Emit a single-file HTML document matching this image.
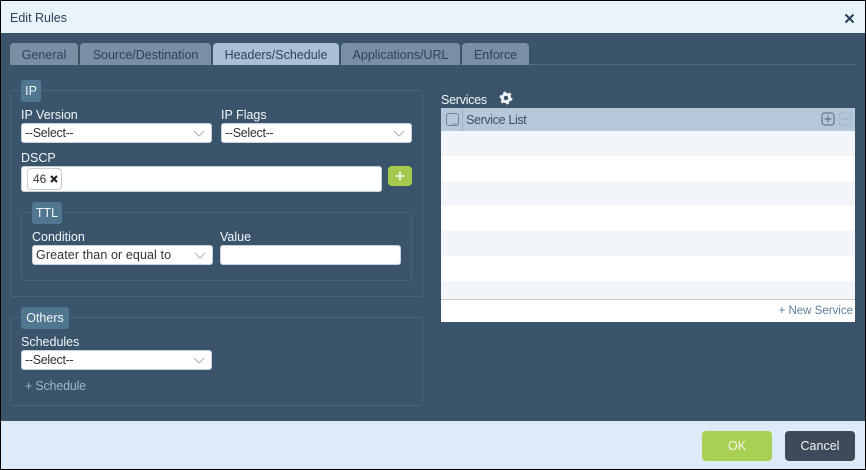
<!DOCTYPE html>
<html><head><meta charset="utf-8">
<style>
html,body{margin:0;padding:0;width:866px;height:470px;overflow:hidden;background:#000}
*{box-sizing:border-box}
body{font-family:"Liberation Sans",Arial,sans-serif;font-size:12.5px;position:relative}
.a{position:absolute}
.t{position:absolute;white-space:nowrap;line-height:16px;height:16px}
.w{color:#f2f6fa}
.d{color:#2f3f4e}
.tab{position:absolute;top:43px;height:22px;background:#7b8fa3;border-radius:4px 4px 0 0;color:#2c4257;text-align:center;line-height:24px}
.fs{position:absolute;border:1px solid #4a6379;border-radius:3px}
.lg{position:absolute;background:#507690;border-radius:3px;color:#f2f6fa;text-align:center;line-height:23px;height:22px}
.in{position:absolute;background:#fff;border-radius:3px;border:1px solid #c8d2dc;height:20px;color:#333;line-height:18px;padding-left:3px;white-space:nowrap}
.in svg{position:absolute;right:6px;top:6px}
.sel{letter-spacing:-.3px}
.r{position:absolute;left:441px;width:414px;height:25px}
</style></head><body>
<div class="a" style="left:1px;top:1px;width:864px;height:32px;background:#e8f3fc"></div>
<div class="a" style="left:1px;top:33px;width:864px;height:388px;background:#3a546b"></div>
<div class="a" style="left:1px;top:421px;width:864px;height:48px;background:#dcebf7"></div>

<div class="t" style="left:10px;top:10px;color:#2c4257">Edit Rules</div>
<svg class="a" style="left:844px;top:13px" width="11" height="11" viewBox="0 0 11 11"><path d="M1.5 1.5L9.5 9.5M9.5 1.5L1.5 9.5" stroke="#2c4257" stroke-width="2.1" fill="none"/></svg>

<div class="a" style="left:10px;top:64px;width:846px;height:1px;background:#4d677e"></div>
<div class="tab" style="left:10px;width:68px">General</div>
<div class="tab" style="left:80px;width:131px">Source/Destination</div>
<div class="tab" style="left:213px;width:126px;background:#a9c0d6">Headers/Schedule</div>
<div class="tab" style="left:341px;width:119px">Applications/URL</div>
<div class="tab" style="left:462px;width:67px">Enforce</div>

<div class="fs" style="left:10px;top:90px;width:413px;height:207px"></div>
<div class="lg" style="left:21px;top:80px;width:20px">IP</div>
<div class="t w" style="left:21px;top:107px">IP Version</div>
<div class="in sel" style="left:21px;top:123px;width:191px">--Select--<svg width="12" height="7" viewBox="0 0 12 7"><path d="M1 1L6 6L11 1" stroke="#a8b2bc" fill="none"/></svg></div>
<div class="t w" style="left:221px;top:107px">IP Flags</div>
<div class="in sel" style="left:221px;top:123px;width:191px">--Select--<svg width="12" height="7" viewBox="0 0 12 7"><path d="M1 1L6 6L11 1" stroke="#a8b2bc" fill="none"/></svg></div>
<div class="t w" style="left:21px;top:150px">DSCP</div>
<div class="in" style="left:21px;top:166px;width:361px;height:26px"></div>
<div class="a" style="left:27px;top:168px;width:35px;height:22px;border:1px solid #ccc;border-radius:4px;background:#fff"></div>
<div class="t" style="left:33px;top:171px;color:#333;font-size:12px">46</div>
<svg class="a" style="left:50px;top:175px" width="8" height="8" viewBox="0 0 8 8"><path d="M1 1L7 7M7 1L1 7" stroke="#222" stroke-width="2.1" fill="none"/></svg>
<div class="a" style="left:388px;top:166px;width:24px;height:20px;background:#a3c94f;border-radius:4px"></div>
<svg class="a" style="left:395px;top:171px" width="10" height="10" viewBox="0 0 10 10"><path d="M5 .5V9.5M.5 5H9.5" stroke="#f4f8ea" stroke-width="1.6" fill="none"/></svg>

<div class="fs" style="left:21px;top:212px;width:391px;height:69px"></div>
<div class="lg" style="left:32px;top:202px;width:30px">TTL</div>
<div class="t w" style="left:32px;top:229px">Condition</div>
<div class="in" style="left:32px;top:245px;width:181px;letter-spacing:.1px">Greater than or equal to<svg width="12" height="7" viewBox="0 0 12 7"><path d="M1 1L6 6L11 1" stroke="#a8b2bc" fill="none"/></svg></div>
<div class="t w" style="left:220px;top:229px">Value</div>
<div class="in" style="left:220px;top:245px;width:181px"></div>

<div class="fs" style="left:10px;top:317px;width:413px;height:89px"></div>
<div class="lg" style="left:21px;top:307px;width:48px">Others</div>
<div class="t w" style="left:21px;top:334px">Schedules</div>
<div class="in sel" style="left:21px;top:350px;width:191px">--Select--<svg width="12" height="7" viewBox="0 0 12 7"><path d="M1 1L6 6L11 1" stroke="#a8b2bc" fill="none"/></svg></div>
<div class="t" style="left:25px;top:378px;color:#9fb6ca;letter-spacing:-.2px">+ Schedule</div>

<div class="t w" style="left:441px;top:92px;letter-spacing:-.25px">Services</div>
<svg class="a" style="left:499px;top:91px" width="14" height="14" viewBox="0 0 14 14"><circle cx="7" cy="7" r="3.7" fill="none" stroke="#f4f7fa" stroke-width="2.9"/><circle cx="7" cy="7" r="5.6" fill="none" stroke="#f4f7fa" stroke-width="1.8" stroke-dasharray="2.6 3.26"/></svg>

<div class="a" style="left:441px;top:108px;width:414px;height:23px;background:#b5c8d9"></div>
<div class="a" style="left:462px;top:108px;width:1px;height:23px;background:#98aec2"></div>
<div class="a" style="left:446px;top:113px;width:13px;height:13px;border:1px solid #6d8398;border-radius:3px"></div>
<svg class="a" style="left:452px;top:123px" width="8" height="3" viewBox="0 0 8 3"><path d="M0 1H1.2M2.6 1H3.8M5.2 1H6.4" stroke="#4f6579" fill="none"/></svg>
<div class="t d" style="left:466px;top:112px;color:#3a4f62;letter-spacing:-.35px">Service List</div>
<svg class="a" style="left:821px;top:112px" width="32" height="14" viewBox="0 0 32 14"><rect x="1" y="1" width="12" height="12" rx="2.5" fill="none" stroke="#4f6579"/><path d="M7 3.5V10.5M3.5 7H10.5" stroke="#4f6579" fill="none"/><rect x="18" y="1" width="12" height="12" rx="2.5" fill="none" stroke="#9fb3c6"/><path d="M20.5 7H27.5" stroke="#8ea3b7" fill="none"/></svg>
<div class="r" style="top:131px;background:#f2f6fb"></div>
<div class="r" style="top:156px;background:#fff"></div>
<div class="r" style="top:181px;background:#f2f6fb"></div>
<div class="r" style="top:206px;background:#fff"></div>
<div class="r" style="top:231px;background:#f2f6fb"></div>
<div class="r" style="top:256px;background:#fff"></div>
<div class="r" style="top:281px;background:#f2f6fb;height:18px"></div>
<div class="a" style="left:441px;top:299px;width:414px;height:23px;background:#fff;border-top:1px solid #c6ccd2"></div>
<div class="t" style="right:13px;top:303px;color:#5f7f9c;font-size:11.5px">+ New Service</div>

<div class="a" style="left:702px;top:431px;width:70px;height:30px;background:#a9d052;border-radius:4px;color:#f4f8ea;text-align:center;line-height:31px">OK</div>
<div class="a" style="left:785px;top:431px;width:70px;height:30px;background:#3e4a5a;border-radius:4px;color:#f2f4f6;text-align:center;line-height:31px">Cancel</div>
</body></html>
